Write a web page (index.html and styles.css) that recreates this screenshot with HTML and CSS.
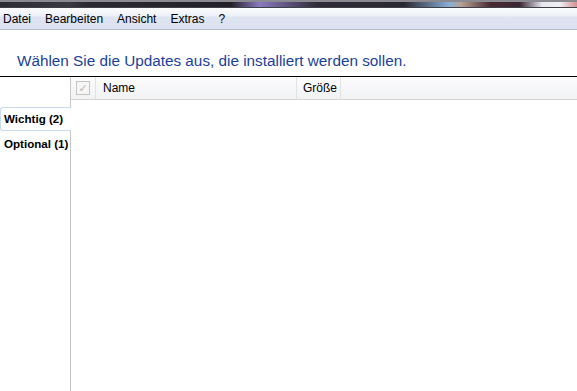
FILE: index.html
```html
<!DOCTYPE html>
<html>
<head>
    <meta charset="utf-8">
    <title>Windows Update</title>
    <link rel="stylesheet" href="styles.css">
</head>
<body>
    <div class="titlebar"></div>
    <div class="menubar">
        <span class="m">Datei</span><span class="m">Bearbeiten</span><span class="m">Ansicht</span><span class="m">Extras</span><span class="m">?</span>
    </div>
    <div class="head">
        <h1>Wählen Sie die Updates aus, die installiert werden sollen.</h1>
    </div>
    <div class="body">
        <div class="tabs">
            <span class="t on">Wichtig (2)</span>
            <span class="t">Optional (1)</span>
        </div>
        <div class="list">
            <div class="cols">
                <span class="c chk"><span class="box">&#10003;</span></span>
                <span class="c name">Name</span>
                <span class="c size">Größe</span>
                <span class="c rest"></span>
            </div>
        </div>
    </div>
</body>
</html>
```
FILE: styles.css
```css
html, body { margin: 0; height: 100%; }
body { font-family: "Liberation Sans", "DejaVu Sans", sans-serif; font-size: 12px; color: #000; background: #fff; display: flex; flex-direction: column; overflow: hidden; }

.titlebar { height: 8px; box-sizing: border-box; border-top: 2px solid #8a8a90; background: linear-gradient(90deg, #2c2c34 0%, #3a3a44 12%, #2a2a30 15%, #232028 40%, #8a7ac0 45%, #2e2a36 55%, #2a2a32 70%, #8ab0d8 78%, #b6a090 80%, #4a2a34 85%, #3a2530 90%, #e6eaf0 94%, #f0f0f4 97%, #d89090 100%); border-bottom: 1px solid #404048; }
.menubar { height: 21px; background: linear-gradient(#fbfcfe 0%, #eef1f8 35%, #dfe4f1 45%, #dbe1f0 100%); border-bottom: 1px solid #b6bccc; display: flex; align-items: center; padding-left: 3px; }
.menubar .m { margin-right: 14px; }

.head { height: 46px; box-sizing: border-box; display: flex; align-items: flex-end; padding: 0 0 6px 17px; }
.head h1 { margin: 0; font-size: 15.3px; font-weight: normal; color: #1a3f9b; }

.body { flex: 1; display: flex; border-top: 1px solid #000; }
.tabs { width: 70px; border-right: 1px solid #c6c6c6; display: flex; flex-direction: column; padding-top: 30px; }
.tabs .t { font-weight: bold; font-size: 11.6px; height: 24px; line-height: 22px; padding-left: 4px; box-sizing: border-box; margin-right: -1px; white-space: nowrap; overflow: hidden; }
.tabs .t.on { background: #fff; border: 1px solid #c9dbee; border-right: none; border-radius: 3px 0 0 3px; padding-left: 3px; margin-bottom: 2px; }

.list { flex: 1; }
.cols { height: 22px; display: flex; background: linear-gradient(#fcfcfd, #f1f2f4); border-bottom: 1px solid #d5d5d5; }
.cols .c { border-right: 1px solid #e2e3e5; display: flex; align-items: center; }
.cols .chk { width: 24px; justify-content: center; }
.cols .box { width: 12px; height: 12px; border: 1px solid #c4c4c4; background: #f6f6f6; color: #b8b8b8; font-size: 11px; line-height: 12px; text-align: center; }
.cols .name { width: 193px; padding-left: 7px; }
.cols .size { width: 37px; padding-left: 6px; }
.cols .rest { flex: 1; border-right: none; }
```
